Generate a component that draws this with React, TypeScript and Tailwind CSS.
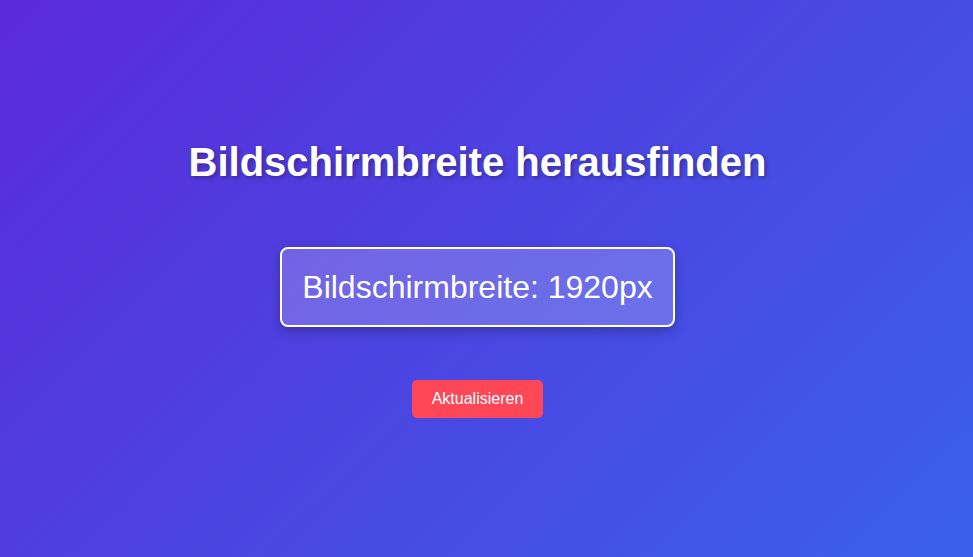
export default function App() {
  return (
    <div className="flex min-h-screen flex-col items-center justify-center bg-[linear-gradient(135deg,#5b2ad9_0%,#3a60eb_100%)] pr-[18px] font-['Liberation_Sans',Arial,sans-serif] text-white">
      <h1 className="mb-[62px] text-[40px] font-bold leading-[46px] [text-shadow:2px_2px_4px_rgba(0,0,0,0.3)]">
        Bildschirmbreite herausfinden
      </h1>
      <div className="mb-[53px] rounded-lg border-2 border-white bg-white/20 px-5 py-5 text-[32px] leading-[36px] shadow-[0_4px_12px_rgba(0,0,0,0.25)]">
        Bildschirmbreite: 1920px
      </div>
      <button className="rounded-[5px] bg-[#ff4757] px-5 py-[10px] text-base leading-[18px] text-white">
        Aktualisieren
      </button>
    </div>
  )
}
